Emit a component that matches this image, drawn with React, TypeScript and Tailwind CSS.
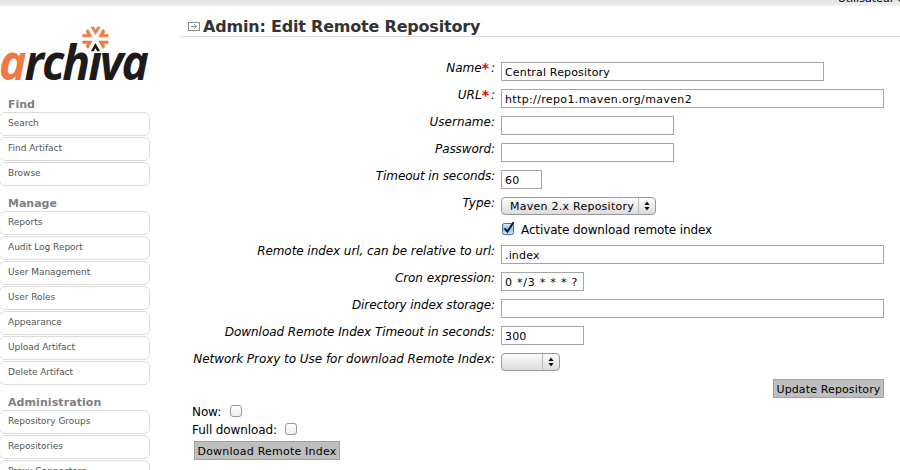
import React from "react";

type MenuSection = { title: string; tracking: string; items: string[] };

const sections: MenuSection[] = [
  { title: "Find", tracking: "", items: ["Search", "Find Artifact", "Browse"] },
  {
    title: "Manage",
    tracking: "",
    items: ["Reports", "Audit Log Report", "User Management", "User Roles", "Appearance", "Upload Artifact", "Delete Artifact"],
  },
  {
    title: "Administration",
    tracking: "tracking-[0.08px]",
    items: ["Repository Groups", "Repositories", "Proxy Connectors"],
  },
];

function Logo() {
  return (
    <svg className="block h-[62px] w-[160px] overflow-visible" viewBox="0 24 160 62" role="img">
      <text
        x="-1"
        y="80"
        textLength="148"
        lengthAdjust="spacingAndGlyphs"
        fontFamily="Open Sans, sans-serif"
        fontSize="47.5"
        fontWeight="700"
        fontStyle="italic"
        letterSpacing="-2"
        fill="#1c1a1b"
      >
        <tspan fill="#ef7a45">a</tspan>rchiva
      </text>
      {/* the caret replaces the dot of the i */}
      <rect x="88" y="38" width="22" height="15" fill="#fff" />
      <path d="M91 51.3 95.4 43 100 51.3H97.2L95.4 48.3 93.8 51.3Z" fill="#1c1a1b" />
      <g fill="#ef7a45" stroke="#ef7a45" strokeWidth="0.6">
        <path d="M91 27H93.6L95.5 30.2 97.6 27H100.2L95.5 34.5Z" />
        <path d="M102.9 29.2 105 31.2 103.4 34.4H108.2V36.8H98.8Z" />
        <path d="M88 29.2 86 31.2 87.6 34.4H82.7V36.8H92Z" />
        <path d="M102.9 48.6 105 46.6 103.4 43.4H108.2V41H98.8Z" />
        <path d="M88 48.6 86 46.6 87.6 43.4H82.7V41H92Z" />
      </g>
    </svg>
  );
}

function Sidebar() {
  return (
    <aside className="w-[180px] shrink-0 pt-[18px]">
      <Logo />
      <nav className="flex flex-col pt-3">
        {sections.map((s) => (
          <section key={s.title} className="mb-[11px]">
            <h2 className={`h-[14px] pl-2 text-[11px] leading-[13px] font-bold text-[#808080] ${s.tracking}`}>{s.title}</h2>
            <ul className="flex flex-col gap-px">
              {s.items.map((item) => (
                <li
                  key={item}
                  className="-ml-px h-6 w-[151px] rounded-[6px] border border-[#dcdcdc] pl-2 text-[9px] leading-[21px] tracking-[-0.03px] text-[#555]"
                >
                  {item}
                </li>
              ))}
            </ul>
          </section>
        ))}
      </nav>
    </aside>
  );
}

function Arrows() {
  return (
    <svg className="h-[10px] w-[6px]" viewBox="0 0 6 10">
      <path d="M3 0.5 5.6 4H0.4ZM3 9.5 0.4 6H5.6Z" fill="#111" />
    </svg>
  );
}

function Select({ value, width }: { value: string; width: string }) {
  return (
    <div
      className={`flex h-[18px] items-stretch rounded-[4px] border border-[#999] bg-linear-to-b from-[#fdfdfd] via-[#ececec] to-[#dcdcdc] ${width}`}
    >
      <span className="flex-1 pl-2 text-[11px] leading-[18px] tracking-[0.25px] whitespace-pre">{value}</span>
      <span className="flex w-[17px] items-center justify-center border-l border-[#bbb]">
        <Arrows />
      </span>
    </div>
  );
}

function Check({ checked = false }: { checked?: boolean }) {
  if (checked) {
    return (
      <svg className="-mt-px block h-[15px] w-[14px]" viewBox="0 0 14 15">
        <defs>
          <linearGradient id="tick-box" x1="0" y1="0" x2="0" y2="1">
            <stop offset="0" stopColor="#dfeefb" />
            <stop offset="0.5" stopColor="#8fc1ee" />
            <stop offset="1" stopColor="#c4f0ff" />
          </linearGradient>
        </defs>
        <rect x="1.5" y="2.5" width="11" height="11" rx="2" fill="url(#tick-box)" stroke="#4d6a97" />
        <path d="M3.6 7.4 6.4 10.6 12.6 1.2" fill="none" stroke="#0c1724" strokeWidth="2" />
      </svg>
    );
  }
  return <span className="block h-3 w-3 rounded-[3px] border border-[#999] bg-linear-to-b from-white to-[#ededed]" />;
}

type Field = { label: string; required?: boolean; value?: string; width: string; select?: boolean; tracking?: string; text?: string };

function Row({ label, required, value = "", width, select, tracking = "", text = "tracking-[0.16px]" }: Field) {
  return (
    <div className="flex h-[27px] items-start">
      <label className={`flex w-[315px] shrink-0 justify-end text-[12px] leading-[12px] whitespace-nowrap italic ${tracking}`}>
        {label}
        {required && <span className="mr-[2px] text-[14px] font-bold text-[#f00000] not-italic">*</span>}
        {required && ":"}
      </label>
      <div className="ml-[6px]">
        {select ? (
          <Select value={value} width={width} />
        ) : (
          <input
            type="text"
            defaultValue={value}
            className={`block h-[19px] rounded-none border border-[#a5a5a5] bg-white px-[3px] pt-[2px] text-[11px] leading-[15px] text-black outline-none ${width} ${text}`}
          />
        )}
      </div>
    </div>
  );
}

const button =
  "block h-[19px] border border-[#a0a0a0] bg-[#bfbfbf] text-center text-[11px] leading-[19px] whitespace-nowrap text-black";

export default function App() {
  return (
    <div className="h-[470px] w-[900px] overflow-hidden bg-white font-['DejaVu_Sans','Liberation_Sans',sans-serif] text-black">
      <header className="flex h-[6px] justify-end overflow-hidden bg-linear-to-b from-[#e2e2e2] to-[#f2f2f2]">
        <span className="-mt-[8px] -mr-[40px] text-[11px] leading-[13px] whitespace-nowrap">Utilisateur courant</span>
      </header>
      <div className="flex items-start">
        <Sidebar />
        <main className="w-[720px] shrink-0">
          <div className="flex h-[31px] items-start border-b border-[#d9d9d9] pl-2">
            <svg className="mt-4 h-[9px] w-3 shrink-0" viewBox="0 0 12 9">
              <rect x="0.5" y="0.5" width="11" height="8" fill="none" stroke="#8d8d8d" />
              <path d="M3 4.5H8.5M6 2.2 8.4 4.5 6 6.8" fill="none" stroke="#8d8d8d" />
            </svg>
            <h1 className="mt-[11px] ml-[3px] text-[16px] leading-[19px] font-bold tracking-[-0.2px] whitespace-nowrap text-[#333]">
              Admin: Edit Remote Repository
            </h1>
          </div>

          <form className="flex flex-col pt-[25px]">
            <Row label="Name" required value="Central Repository" width="w-[323px]" />
            <Row label="URL" required value="http://repo1.maven.org/maven2" width="w-[383px]" text="tracking-[0.36px]" />
            <Row label="Username:" width="w-[173px]" />
            <Row label="Password:" width="w-[173px]" tracking="tracking-[-0.1px]" />
            <Row label="Timeout in seconds:" value="60" width="w-[41px]" tracking="tracking-[-0.1px]" />
            <Row label="Type:" value="Maven 2.x Repository" width="w-[155px]" select />
            <div className="-mt-[2px] flex h-[23px] items-start pl-[321px]">
              <Check checked />
              <span className="ml-[6px] pt-px text-[12px] leading-[15px] tracking-[-0.12px]">Activate download remote index</span>
            </div>
            <Row label="Remote index url, can be relative to url:" value=".index" width="w-[383px]" tracking="tracking-[-0.06px]" />
            <Row label="Cron expression:" value="0 */3 * * * ?" width="w-[83px]" tracking="tracking-[-0.08px]" text="tracking-[0.77px]" />
            <Row label="Directory index storage:" width="w-[383px]" tracking="tracking-[-0.12px]" />
            <Row label="Download Remote Index Timeout in seconds:" value="300" width="w-[83px]" tracking="tracking-[-0.05px]" />
            <Row
              label="Network Proxy to Use for download Remote Index:"
              value=""
              width="w-[59px]"
              select
              tracking="tracking-[-0.04px]"
            />
            <div className="-mt-px flex justify-end pr-4">
              <button type="button" className={`w-[111px] tracking-[0.13px] ${button}`}>
                Update Repository
              </button>
            </div>
          </form>

          <form className="flex flex-col pt-[7px] pl-3 text-[12px] leading-[15px] tracking-[-0.1px]">
            <div className="flex h-[18px] items-start">
              <span className="mr-[9px]">Now:</span>
              <Check />
            </div>
            <div className="flex h-[18px] items-start">
              <span className="mr-[8px]">Full download:</span>
              <Check />
            </div>
            <button type="button" className={`ml-0.5 w-[146px] tracking-[0.22px] ${button}`}>
              Download Remote Index
            </button>
          </form>
        </main>
      </div>
    </div>
  );
}
